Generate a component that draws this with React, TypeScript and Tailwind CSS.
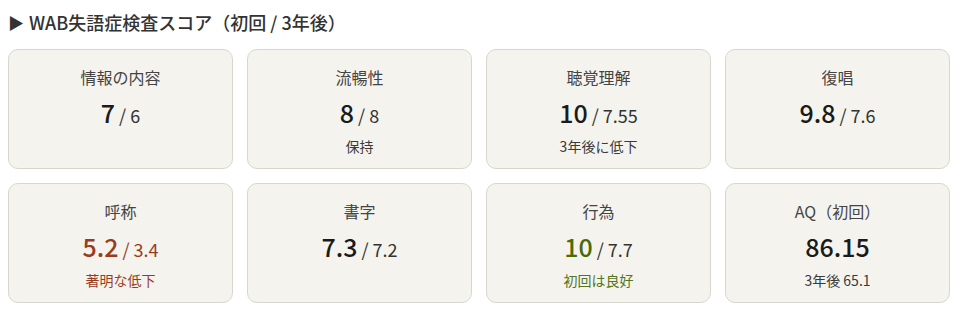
type Score = {
  label: string;
  first: string;
  later?: string;
  note?: string;
  tone?: "bad" | "good";
};

const scores: Score[] = [
  { label: "情報の内容", first: "7", later: "6" },
  { label: "流暢性", first: "8", later: "8", note: "保持" },
  { label: "聴覚理解", first: "10", later: "7.55", note: "3年後に低下" },
  { label: "復唱", first: "9.8", later: "7.6" },
  { label: "呼称", first: "5.2", later: "3.4", note: "著明な低下", tone: "bad" },
  { label: "書字", first: "7.3", later: "7.2" },
  { label: "行為", first: "10", later: "7.7", note: "初回は良好", tone: "good" },
  { label: "AQ（初回）", first: "86.15", note: "3年後 65.1" },
];

const ScoreCard = ({ s }: { s: Score }) => {
  const firstColor =
    s.tone === "bad" ? "text-[#9b3b1e]" : s.tone === "good" ? "text-[#4b6a0a]" : "text-[#1a1a1a]";
  const laterColor = s.tone === "bad" ? "text-[#9b3b1e]" : "text-[#333333]";
  const noteColor =
    s.tone === "bad" ? "text-[#9b3b1e]" : s.tone === "good" ? "text-[#55751a]" : "text-[#3a3a3a]";

  return (
    <div className="h-[120px] rounded-[10px] border border-[#d8d6ce] bg-[#f4f3ed] pt-[15px] flex flex-col items-center">
      <p className="text-[16px] leading-[24px] text-[#444444]">{s.label}</p>
      <p className="mt-[6px] leading-[34px]">
        <span className={`text-[25px] font-medium ${firstColor}`}>{s.first}</span>
        {s.later && (
          <span className={`text-[18px] ${laterColor}`}> / {s.later}</span>
        )}
      </p>
      {s.note && (
        <p className={`mt-[3px] text-[14px] leading-[20px] ${noteColor}`}>{s.note}</p>
      )}
    </div>
  );
};

export default function App() {
  return (
    <div className="w-[958px] h-[321px] bg-white px-[8px] pt-[9px] font-['Noto_Sans_CJK_JP','Noto_Sans',sans-serif]">
      <h2 className="text-[18px] leading-[26px] font-medium text-[#333333] flex items-center gap-[5px]">
        <span className="text-[16px]">▶</span>
        WAB失語症検査スコア（初回 / 3年後）
      </h2>

      <div className="mt-[14px] grid grid-cols-4 gap-[14px]">
        {scores.map((s) => (
          <ScoreCard key={s.label} s={s} />
        ))}
      </div>
    </div>
  );
}
